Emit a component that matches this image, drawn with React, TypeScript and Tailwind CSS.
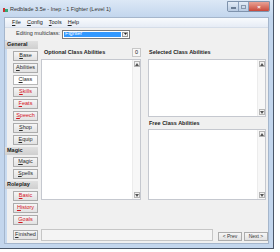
import React from "react";

const Btn = ({ label, red, selected }: { label: string; red?: boolean; selected?: boolean }) => (
  <div
    className={`mt-[2px] h-[10px] ml-[6px] w-[25px] flex items-center justify-center border text-[5.5px] leading-none ${
      selected ? "bg-white border-[#b8b8b8]" : "bg-gradient-to-b from-[#f6f6f6] to-[#e2e2e2] border-[#acacac]"
    } ${red ? "text-[#d4141e]" : "text-[#2a2a2a]"}`}
  >
    <span>
      <span className="underline">{label.slice(0, 1)}</span>
      {label.slice(1)}
    </span>
  </div>
);

const Hdr = ({ label, first }: { label: string; first?: boolean }) => (
  <div
    className={`${first ? "" : "mt-[2px]"} h-[8px] w-[33px] -ml-[2px] bg-gradient-to-b from-[#e0e0e0] to-[#cfcfcf] flex items-center pl-[2px] text-[5.5px] font-bold text-[#202020] leading-none`}
  >
    {label}
  </div>
);

const Arrow = ({ up }: { up?: boolean }) => (
  <div className="h-[6px] w-[6px] mx-auto border border-[#b5b5b5] bg-[#f2f2f2] flex items-center justify-center">
    <svg width="4" height="3" viewBox="0 0 4 3">
      {up ? <path d="M0 3 L2 0 L4 3Z" fill="#555" /> : <path d="M0 0 L2 3 L4 0Z" fill="#555" />}
    </svg>
  </div>
);

const ListBox = ({ className }: { className: string }) => (
  <div className={`flex border border-[#c5c8cf] bg-white ${className}`}>
    <div className="flex-1" />
    <div className="w-[8px] bg-[#f7f7f7] flex flex-col justify-between py-[1px] border-l border-[#ececec]">
      <Arrow up />
      <Arrow />
    </div>
  </div>
);

export default function App() {
  return (
    <div className="w-[280px] h-[252px] bg-white overflow-hidden font-['Liberation_Sans',sans-serif]">
      <div className="w-[274px] h-[249px] bg-[#c3d6ed] border-r border-b border-[#4a5668] flex flex-col">
        {/* title bar */}
        <div className="h-[17px] flex items-start bg-gradient-to-b from-[#dce8f6] to-[#c3d6ed] relative">
          <div className="mt-[8px] ml-[3px] w-[5px] h-[4px] flex">
            <svg width="5" height="4" viewBox="0 0 5 4">
              <rect x="0" y="0" width="2" height="4" fill="#c33" />
              <rect x="2" y="1" width="3" height="3" fill="#3a7" />
            </svg>
          </div>
          <div className="mt-[7px] ml-[2px] text-[5.5px] leading-none text-[#333]">Redblade 3.5e - Inep - 1 Fighter (Level 1)</div>
          <div className="absolute right-[3px] top-[1px] flex h-[11px] border border-[#7f93ad] rounded-b-[2px] overflow-hidden">
            <div className="w-[11px] bg-gradient-to-b from-[#e3ecf7] to-[#b9cbe2] flex items-center justify-center border-r border-[#8aa0bc]">
              <div className="w-[5px] h-[2px] bg-white border border-[#6b7d95] mt-[3px]" />
            </div>
            <div className="w-[10px] bg-gradient-to-b from-[#e3ecf7] to-[#b9cbe2] flex items-center justify-center border-r border-[#8aa0bc]">
              <div className="w-[5px] h-[4px] border border-[#8898ad]" />
            </div>
            <div className="w-[20px] bg-gradient-to-b from-[#e8a195] to-[#c8473a] flex items-center justify-center text-white text-[6px] font-bold leading-none">
              ×
            </div>
          </div>
        </div>
        {/* client */}
        <div className="flex-1 mx-[4px] mb-[4px] bg-[#f0f0f0] border border-[#a5b6cc] flex flex-col">
          <div className="h-[10px] bg-gradient-to-b from-[#f8fafd] to-[#e6ecf5] border-b border-[#d5dde8] flex items-center gap-[6px] pl-[7px] text-[5.5px] leading-none text-[#222]">
            <span><span className="underline">F</span>ile</span>
            <span><span className="underline">C</span>onfig</span>
            <span><span className="underline">T</span>ools</span>
            <span><span className="underline">H</span>elp</span>
          </div>
          <div className="h-[12px] flex items-center pl-[11px] text-[5.5px] leading-none text-[#333]">
            <span>Editing multiclass:</span>
            <div className="ml-[2px] w-[68px] h-[9px] border border-[#7a7a7a] bg-white flex items-center p-[1px]">
              <div className="flex-1 h-full bg-[#3399ff] text-white flex items-center pl-[1px]">Fighter</div>
              <div className="w-[6px] h-full border border-[#9a9a9a] bg-[#efefef] ml-[1px] flex items-center justify-center">
                <svg width="3" height="2" viewBox="0 0 3 2"><path d="M0 0 L1.5 2 L3 0Z" fill="#222" /></svg>
              </div>
            </div>
          </div>
          <div className="flex-1 flex">
            {/* sidebar */}
            <div className="w-[33px] flex flex-col pt-[1px] border-l-[2px] border-[#c7daf0]">
              <Hdr label="General" first />
              <Btn label="Base" />
              <Btn label="Abilities" />
              <Btn label="Class" selected />
              <Btn label="Skills" red />
              <Btn label="Feats" red />
              <Btn label="Speech" red />
              <Btn label="Shop" />
              <Btn label="Equip" />
              <Hdr label="Magic" />
              <Btn label="Magic" />
              <Btn label="Spells" />
              <Hdr label="Roleplay" />
              <Btn label="Basic" red />
              <Btn label="History" red />
              <Btn label="Goals" red />
              <div className="mt-[3px]">
                <Btn label="Finished" />
              </div>
            </div>
            {/* main */}
            <div className="flex-1 flex flex-col pl-[3px] pr-[2px]">
              <div className="flex gap-[7px] mt-[7px]">
                <div className="w-[100px] flex flex-col">
                  <div className="h-[11px] flex items-center justify-between">
                    <span className="ml-[3px] text-[5.5px] font-bold text-[#222] leading-none">Optional Class Abilities</span>
                    <div className="w-[9px] h-[9px] border border-[#c8c8c8] bg-[#f7f7f7] text-[5.5px] leading-none flex items-center justify-center text-[#222]">0</div>
                  </div>
                  <ListBox className="h-[141px] mt-[1px]" />
                </div>
                <div className="w-[118px] flex flex-col">
                  <div className="h-[11px] flex items-center">
                    <span className="ml-[1px] text-[5.5px] font-bold text-[#222] leading-none">Selected Class Abilities</span>
                  </div>
                  <ListBox className="h-[58px] mt-[1px]" />
                  <div className="h-[11px] flex items-center mt-[1px]">
                    <span className="ml-[1px] text-[5.5px] font-bold text-[#222] leading-none">Free Class Abilities</span>
                  </div>
                  <ListBox className="h-[71px]" />
                </div>
              </div>
              <div className="flex-1" />
              <div className="flex items-end mb-[2px]">
                <div className="w-[172px] h-[12px] border border-[#c6c6c6] bg-[#f4f4f4]" />
                <div className="ml-[5px] w-[24px] h-[9px] border border-[#acacac] bg-gradient-to-b from-[#f6f6f6] to-[#e2e2e2] text-[5px] leading-none flex items-center justify-center text-[#333]">
                  &lt; Prev
                </div>
                <div className="ml-[2px] w-[24px] h-[9px] border border-[#acacac] bg-gradient-to-b from-[#f6f6f6] to-[#e2e2e2] text-[5px] leading-none flex items-center justify-center text-[#333]">
                  Next &gt;
                </div>
              </div>
            </div>
          </div>
        </div>
      </div>
    </div>
  );
}
